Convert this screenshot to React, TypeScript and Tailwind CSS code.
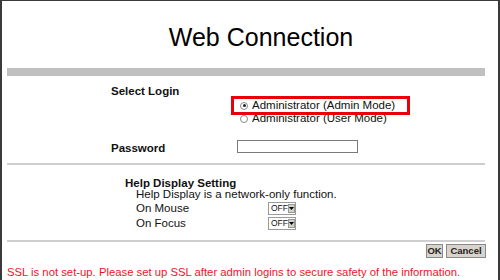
import React from 'react';

const FONT = { fontFamily: '"Liberation Sans", Arial, sans-serif' };

function Radio({ checked }: { checked?: boolean }) {
  return (
    <span className="inline-flex h-[8px] w-[8px] items-center justify-center rounded-full border border-[#8a8a8a] bg-white">
      {checked && <span className="h-[3px] w-[3px] rounded-full bg-[#222]" />}
    </span>
  );
}

function OffSelect() {
  return (
    <div className="flex h-[13px] w-[28px] items-center border border-[#9a9a9a] bg-white">
      <span className="flex-1 pl-[2px] text-[8.5px] leading-none text-[#111]">OFF</span>
      <span className="mr-[1px] flex h-[9px] w-[9px] items-center justify-center border border-[#999] bg-[#d4d0c8]">
        <svg width="5" height="3" viewBox="0 0 5 3">
          <path d="M0 0h5L2.5 3z" fill="#000" />
        </svg>
      </span>
    </div>
  );
}

export default function App() {
  return (
    <div
      className="h-[280px] w-[500px] overflow-hidden border-l-2 border-r-2 border-t border-[#3a3a3a] bg-white text-[11.5px] text-[#111]"
      style={FONT}
    >
      <div className="pl-[22px] pt-[21px] text-center text-[25px] leading-[30px] text-black">
        Web Connection
      </div>

      <div className="ml-[5px] mt-[16px] h-[8px] w-[478px] bg-[#c0c0c0]" />

      <div className="grid grid-cols-[126px_1fr] pl-[109px] pt-[8px]">
        <div className="font-bold leading-[14px]">Select Login</div>
        <div />
        <div />
        <div className="pt-[1px]">
          <div className="relative flex h-[13px] items-center gap-[4px] pl-[3px]">
            <Radio checked />
            <span>Administrator (Admin Mode)</span>
            <div className="absolute left-[-6px] top-[-3px] h-[19px] w-[179px] border-[3px] border-[#e8000b]" />
          </div>
          <div className="flex h-[13px] items-center gap-[4px] pl-[3px]">
            <Radio />
            <span>Administrator (User Mode)</span>
          </div>
        </div>
        <div className="pt-[16px] font-bold leading-[14px]">Password</div>
        <div className="pt-[15px]">
          <div className="h-[13px] w-[121px] border border-[#7a7a7a] bg-white" />
        </div>
      </div>

      <div className="ml-[5px] mt-[8px] h-[2px] w-[478px] bg-[#cfcfcf]" />

      <div className="pl-[123px] pt-[12px]">
        <div className="font-bold leading-[13px]">Help Display Setting</div>
        <div className="-mt-[3px] pl-[11px]">
          <div className="leading-[15px]">Help Display is a network-only function.</div>
          <div className="-mt-[1px] flex h-[15px] items-center">
            <span className="w-[132px]">On Mouse</span>
            <OffSelect />
          </div>
          <div className="flex h-[15px] items-center">
            <span className="w-[132px]">On Focus</span>
            <OffSelect />
          </div>
        </div>
      </div>

      <div className="ml-[5px] mt-[9px] h-[2px] w-[478px] bg-[#cfcfcf]" />

      <div className="flex w-[484px] justify-end gap-[3px] pt-[2px]">
        <button className="h-[14px] w-[17px] border border-[#8a8a8a] bg-[#d8d4cc] text-[9.5px] font-bold leading-none text-[#222]">
          OK
        </button>
        <button className="h-[14px] w-[40px] border border-[#8a8a8a] bg-[#d8d4cc] text-[9.5px] font-bold leading-none text-[#222]">
          Cancel
        </button>
      </div>

      <div className="pl-[5px] pt-[7px] text-[11.3px] leading-[14px] text-[#f0141e]">
        SSL is not set-up. Please set up SSL after admin logins to secure safety of the information.
      </div>
    </div>
  );
}
